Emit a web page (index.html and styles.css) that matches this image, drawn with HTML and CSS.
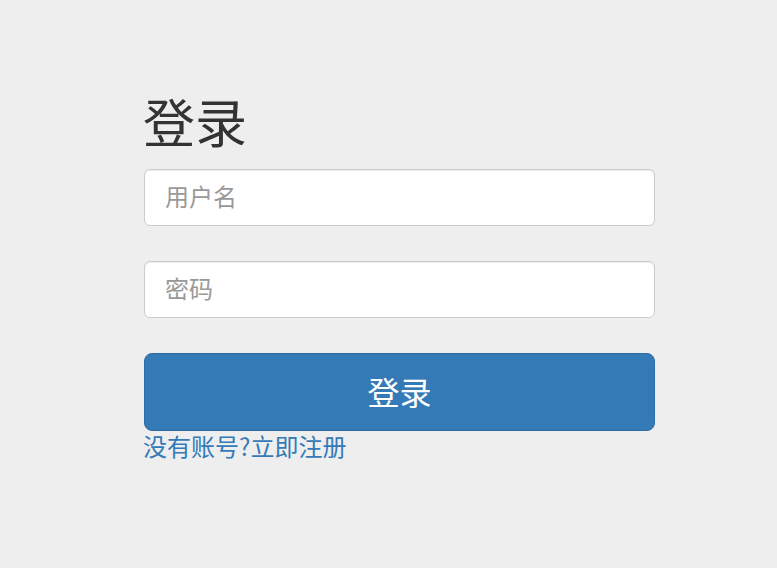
FILE: index.html
```html
<!DOCTYPE html>
<html lang="zh-CN">
<head>
<meta charset="utf-8">
<title>登录</title>
<link rel="stylesheet" href="styles.css">
</head>
<body>
<main class="page">
  <form class="login">
    <h1 class="title">登录</h1>
    <input class="field" type="text" placeholder="用户名">
    <input class="field" type="password" placeholder="密码">
    <button class="submit" type="button">登录</button>
    <a class="register" href="#">没有账号?立即注册</a>
  </form>
</main>
</body>
</html>
```

FILE: styles.css
```css
html, body {
  margin: 0;
  padding: 0;
  background: #eeeeee;
  width: 777px;
  height: 568px;
  overflow: hidden;
}
body {
  font-family: "Microsoft YaHei", "Noto Sans CJK SC", "Liberation Sans", sans-serif;
  color: #333;
}
.page {
  padding: 92px 0 0 144px;
}
.login {
  display: flex;
  flex-direction: column;
  width: 511px;
  margin: 0;
}
.title {
  margin: 0 0 20px -1px;
  font-size: 52px;
  font-weight: 400;
  line-height: 57px;
  color: #333;
}
.field {
  box-sizing: border-box;
  height: 57px;
  width: 511px;
  margin: 0 0 35px 0;
  padding: 0 20px 4px;
  border: 1px solid #cccccc;
  border-radius: 6px;
  background: #fff;
  font-family: inherit;
  font-size: 24px;
  color: #555;
  box-shadow: inset 0 1px 1px rgba(0,0,0,0.075);
  outline: none;
}
.field::placeholder {
  color: #999;
}
.submit {
  box-sizing: border-box;
  height: 78px;
  width: 511px;
  margin: 0;
  padding: 0 0 2px;
  border: 1px solid #2e6da4;
  border-radius: 8px;
  background: #337ab7;
  color: #fff;
  font-family: inherit;
  font-size: 32px;
  cursor: pointer;
}
.register {
  align-self: flex-start;
  margin-left: -1px;
  font-size: 24px;
  line-height: 30px;
  color: #337ab7;
  text-decoration: none;
}
```
